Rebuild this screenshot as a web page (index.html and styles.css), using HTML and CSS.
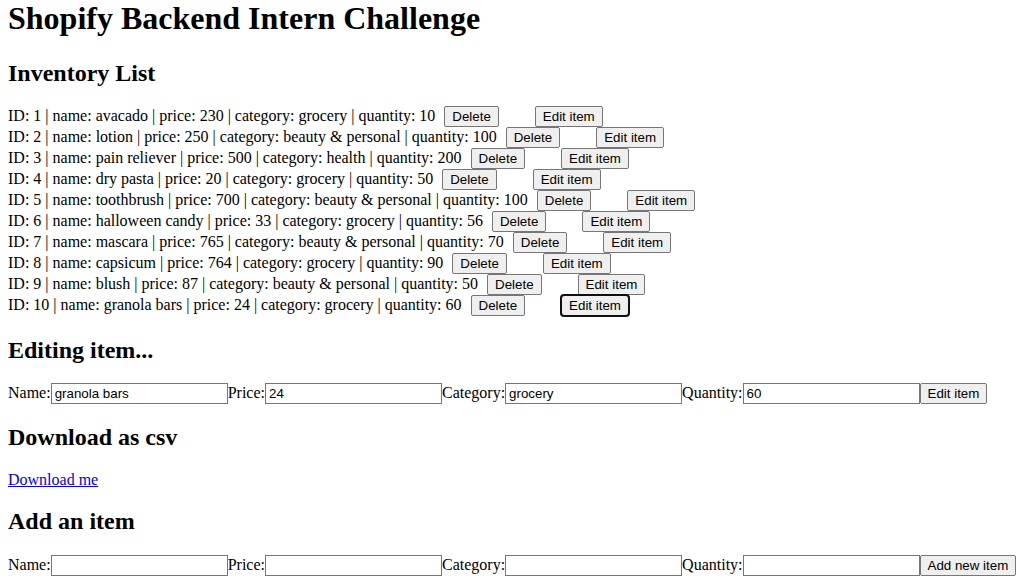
FILE: index.html
```html
<!DOCTYPE html>
<html>
<head>
<meta charset="utf-8">
<title>Shopify Backend Intern Challenge</title>
<link rel="stylesheet" href="styles.css">
</head>
<body>
<h1 class="title">Shopify Backend Intern Challenge</h1>
<h2 class="heading heading-inventory">Inventory List</h2>
<div class="list">
  <div class="row">ID: 1 | name: avacado | price: 230 | category: grocery | quantity: 10 <button class="btn del">Delete</button><button class="btn edit">Edit item</button></div>
  <div class="row">ID: 2 | name: lotion | price: 250 | category: beauty &amp; personal | quantity: 100 <button class="btn del">Delete</button><button class="btn edit">Edit item</button></div>
  <div class="row">ID: 3 | name: pain reliever | price: 500 | category: health | quantity: 200 <button class="btn del">Delete</button><button class="btn edit">Edit item</button></div>
  <div class="row">ID: 4 | name: dry pasta | price: 20 | category: grocery | quantity: 50 <button class="btn del">Delete</button><button class="btn edit">Edit item</button></div>
  <div class="row">ID: 5 | name: toothbrush | price: 700 | category: beauty &amp; personal | quantity: 100 <button class="btn del">Delete</button><button class="btn edit">Edit item</button></div>
  <div class="row">ID: 6 | name: halloween candy | price: 33 | category: grocery | quantity: 56 <button class="btn del">Delete</button><button class="btn edit">Edit item</button></div>
  <div class="row">ID: 7 | name: mascara | price: 765 | category: beauty &amp; personal | quantity: 70 <button class="btn del">Delete</button><button class="btn edit">Edit item</button></div>
  <div class="row">ID: 8 | name: capsicum | price: 764 | category: grocery | quantity: 90 <button class="btn del">Delete</button><button class="btn edit">Edit item</button></div>
  <div class="row">ID: 9 | name: blush | price: 87 | category: beauty &amp; personal | quantity: 50 <button class="btn del">Delete</button><button class="btn edit">Edit item</button></div>
  <div class="row">ID: 10 | name: granola bars | price: 24 | category: grocery | quantity: 60 <button class="btn del">Delete</button><button class="btn edit focused">Edit item</button></div>
</div>
<h2 class="heading heading-editing">Editing item...</h2>
<form class="form">Name:<input class="field" type="text" value="granola bars">Price:<input class="field" type="text" value="24">Category:<input class="field" type="text" value="grocery">Quantity:<input class="field" type="text" value="60"><button class="btn" type="button">Edit item</button></form>
<h2 class="heading">Download as csv</h2>
<div class="download"><a class="link" href="#">Download me</a></div>
<h2 class="heading heading-add">Add an item</h2>
<form class="form">Name:<input class="field" type="text">Price:<input class="field" type="text">Category:<input class="field" type="text">Quantity:<input class="field" type="text"><button class="btn" type="button">Add new item</button></form>
</body>
</html>
```
FILE: styles.css
```css
html, body {
  font-family: "Liberation Serif", "Times New Roman", serif;
  font-size: 16px;
  color: #000;
  background: #fff;
}
body {
  margin: 0 8px 8px 8px;
}
.title {
  font-size: 32px;
  font-weight: bold;
  margin: 0 0 23.44px 0;
}
.heading {
  font-size: 24px;
  font-weight: bold;
  margin: 19.92px 0;
}
.heading-inventory {
  margin-top: 0;
  margin-bottom: 18.92px;
}
.heading-editing {
  margin-top: 20.92px;
  margin-bottom: 18.92px;
}
.heading-add {
  margin-top: 18.92px;
}
.row {
  white-space: nowrap;
}
.btn {
  font-family: "Liberation Sans", Arial, sans-serif;
  font-size: 13.333px;
  color: #000;
  background: #efefef;
  border: 1px solid #767676;
  border-radius: 2px;
  padding: 2px 7px;
  margin: 0;
  vertical-align: baseline;
}
.del {
  margin-left: 5px;
}
.edit {
  margin-left: 36px;
}
.focused {
  outline: 2px solid #101010;
  outline-offset: -1px;
  border-radius: 3px;
}
.form {
  margin: 0;
  white-space: nowrap;
}
.field {
  font-family: "Liberation Sans", Arial, sans-serif;
  font-size: 13.333px;
  color: #000;
  box-sizing: border-box;
  width: 177px;
  padding: 2px 3px;
  border: 1px solid #767676;
  border-radius: 0;
  margin: 0;
  vertical-align: baseline;
}
.download {
  margin: 0;
}
.link {
  color: #0000ee;
  text-decoration: underline;
}
```
